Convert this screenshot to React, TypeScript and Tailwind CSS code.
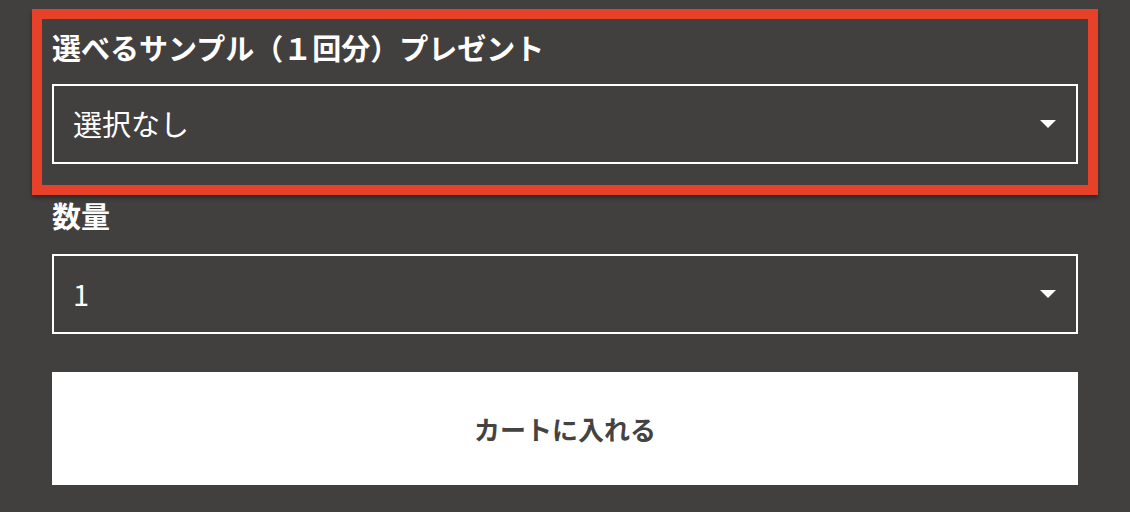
const font = { fontFamily: '"Noto Sans CJK JP", "Noto Sans", sans-serif' }

function Caret() {
  return (
    <svg width="16" height="8" viewBox="0 0 16 8" className="shrink-0">
      <path d="M0 0 H16 L8 8 Z" fill="#ffffff" />
    </svg>
  )
}

function SelectBox({ value }: { value: string }) {
  return (
    <div className="h-[80px] border-2 border-white flex items-center justify-between pl-[19px] pr-[20px]">
      <span className="text-[29px] text-white leading-none -mt-[2px]">{value}</span>
      <Caret />
    </div>
  )
}

export default function App() {
  return (
    <div className="w-[1130px] h-[512px] bg-[#42403e] overflow-hidden" style={font}>
      <div className="px-[32px] pt-[9px]">
        {/* highlighted field */}
        <div className="border-[10px] border-[#e8412a] px-[10px] pt-[10px] pb-[21px] shadow-[0_3px_4px_rgba(0,0,0,0.35)]">
          <div className="h-[36px] mb-[19px] flex items-center text-[29px] font-bold text-white leading-none">
            選べるサンプル（１回分）プレゼント
          </div>
          <SelectBox value="選択なし" />
        </div>

        <div className="px-[20px]">
          {/* quantity */}
          <div className="mt-[2px] h-[36px] mb-[21px] flex items-center text-[29px] font-bold text-white leading-none">
            数量
          </div>
          <SelectBox value="1" />

          <button className="mt-[38px] w-full h-[113px] bg-white flex items-center justify-center text-[26px] font-bold text-[#454341]">
            カートに入れる
          </button>
        </div>
      </div>
    </div>
  )
}
